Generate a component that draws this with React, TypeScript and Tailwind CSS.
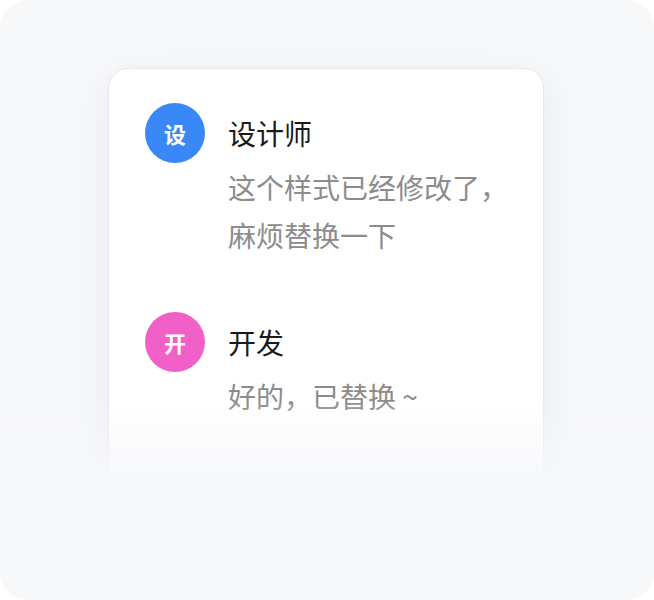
import React from 'react';

type Message = {
  initial: string;
  name: string;
  color: string;
  lines: string[];
};

const messages: Message[] = [
  {
    initial: '设',
    name: '设计师',
    color: 'bg-[#3a87f8]',
    lines: ['这个样式已经修改了，', '麻烦替换一下'],
  },
  {
    initial: '开',
    name: '开发',
    color: 'bg-[#f160c9]',
    lines: ['好的，已替换 ~'],
  },
];

function ChatItem({ msg }: { msg: Message }) {
  return (
    <div className="flex items-start gap-[23px]">
      <div
        className={`flex h-[60px] w-[60px] shrink-0 items-center justify-center rounded-full ${msg.color} text-[22px] font-semibold text-white`}
      >
        {msg.initial}
      </div>
      <div className="flex flex-col whitespace-nowrap">
        <div className="text-[28px] leading-[60px] text-[#1a1a1a]">{msg.name}</div>
        {msg.lines.map((line) => (
          <div key={line} className="text-[28px] leading-[48px] text-[#8c8c8c]">
            {line}
          </div>
        ))}
      </div>
    </div>
  );
}

export default function App() {
  return (
    <div
      className="relative h-[600px] w-[654px] overflow-hidden rounded-[28px] bg-[#f7f8fa]"
      style={{ fontFamily: '"Noto Sans CJK SC", "Noto Sans", sans-serif' }}
    >
      <div className="ml-[108px] mt-[68px] h-[520px] w-[436px] rounded-[20px] border border-[#e6e7eb] bg-white pl-[36px] pr-[20px] pt-[34px] shadow-[0_10px_40px_rgba(30,40,60,0.06)]">
        <div className="flex flex-col gap-[53px]">
          {messages.map((m) => (
            <ChatItem key={m.name} msg={m} />
          ))}
        </div>
      </div>

      {/* bottom fade */}
      <div className="absolute inset-x-0 bottom-0 h-[200px] bg-gradient-to-b from-[#f7f8fa]/0 via-[#f7f8fa] via-40% to-[#f7f8fa]" />
    </div>
  );
}
